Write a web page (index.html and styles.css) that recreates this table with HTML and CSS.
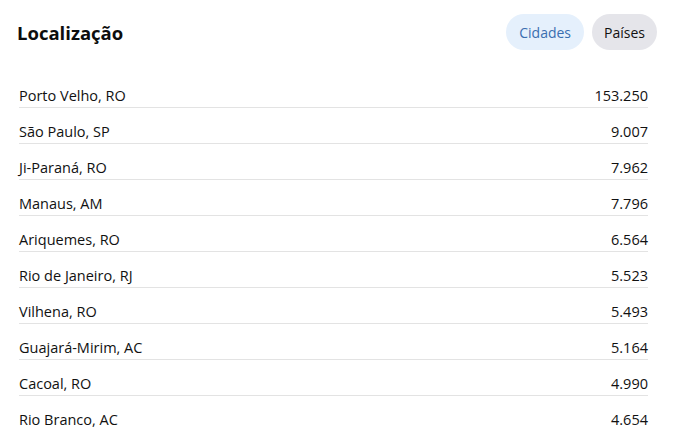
FILE: index.html
```html
<!DOCTYPE html>
<html lang="pt-BR">
<head>
<meta charset="utf-8">
<title>Localização</title>
<link rel="stylesheet" href="styles.css">
</head>
<body>
<div class="card">
  <div class="header">
    <h2 class="title">Localização</h2>
    <div class="tabs">
      <button class="tab active">Cidades</button>
      <button class="tab">Países</button>
    </div>
  </div>
  <ul class="list">
    <li class="row"><span>Porto Velho, RO</span><span>153.250</span></li>
    <li class="row"><span>São Paulo, SP</span><span>9.007</span></li>
    <li class="row"><span>Ji-Paraná, RO</span><span>7.962</span></li>
    <li class="row"><span>Manaus, AM</span><span>7.796</span></li>
    <li class="row"><span>Ariquemes, RO</span><span>6.564</span></li>
    <li class="row"><span>Rio de Janeiro, RJ</span><span>5.523</span></li>
    <li class="row"><span>Vilhena, RO</span><span>5.493</span></li>
    <li class="row"><span>Guajará-Mirim, AC</span><span>5.164</span></li>
    <li class="row"><span>Cacoal, RO</span><span>4.990</span></li>
    <li class="row"><span>Rio Branco, AC</span><span>4.654</span></li>
  </ul>
</div>
</body>
</html>
```

FILE: styles.css
```css
html, body {
  margin: 0;
  padding: 0;
  background: #ffffff;
}
body {
  font-family: "Open Sans", "Noto Sans", sans-serif;
  color: #111111;
}
.card {
  padding: 14px 21px 0 17px;
}
.header {
  display: flex;
  align-items: center;
  justify-content: space-between;
  height: 36px;
}
.title {
  margin: 0;
  font-size: 18.5px;
  font-weight: 700;
  color: #0d0d0d;
}
.tabs {
  display: flex;
  gap: 8px;
}
.tab {
  font-family: inherit;
  font-size: 14px;
  border: none;
  height: 36px;
  padding: 0 12px;
  border-radius: 18px;
  background: #e5e5ea;
  color: #111111;
  cursor: pointer;
}
.tab.active {
  padding: 0 13px;
  background: #e5f0fc;
  color: #3a6eb0;
}
.list {
  list-style: none;
  margin: 22px 9px 0 2px;
  padding: 0;
}
.row {
  display: flex;
  justify-content: space-between;
  padding-top: 13px;
  line-height: 22px;
  font-size: 14.5px;
  border-bottom: 1px solid #e3e3e3;
}
.row:last-child {
  border-bottom: none;
}
```
